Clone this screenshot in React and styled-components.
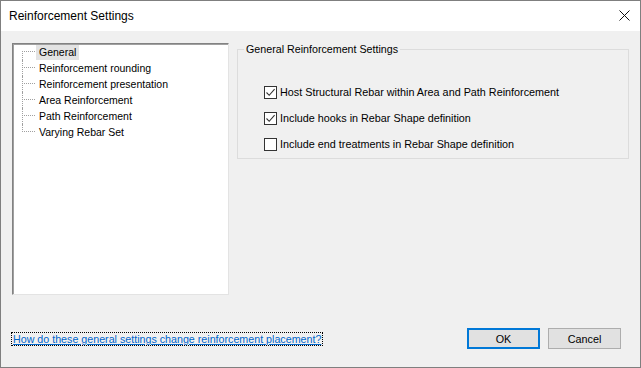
import React from 'react';
import styled, { createGlobalStyle } from 'styled-components';

const GlobalStyle = createGlobalStyle`
  html, body {
    margin: 0;
    padding: 0;
    background: #ffffff;
  }
  body {
    font-family: 'Liberation Sans', Arial, sans-serif;
    font-size: 10.7px;
    color: #000;
  }
`;

const treeItems = [
  'General',
  'Reinforcement rounding',
  'Reinforcement presentation',
  'Area Reinforcement',
  'Path Reinforcement',
  'Varying Rebar Set',
];

const options = [
  { label: 'Host Structural Rebar within Area and Path Reinforcement', checked: true },
  { label: 'Include hooks in Rebar Shape definition', checked: true },
  { label: 'Include end treatments in Rebar Shape definition', checked: false },
];

const App = () => {
  return (
    <>
      <GlobalStyle />
      <Window>
        <TitleBar>
          <Title>Reinforcement Settings</Title>
          <CloseButton>
            <svg width="11" height="11" viewBox="0 0 11 11">
              <path d="M0.5 0.5 L10.5 10.5 M10.5 0.5 L0.5 10.5" stroke="#111" strokeWidth="1" fill="none" />
            </svg>
          </CloseButton>
        </TitleBar>
        <Body>
          <MainRow>
            <TreeBox>
              {treeItems.map((item, i) => (
                <TreeRow key={item} first={i === 0} last={i === treeItems.length - 1}>
                  <TreeLabel selected={i === 0}>{item}</TreeLabel>
                </TreeRow>
              ))}
            </TreeBox>
            <GroupBox>
              <Legend>General Reinforcement Settings</Legend>
              <OptionList>
                {options.map((opt) => (
                  <OptionRow key={opt.label}>
                    <CheckBox>
                      {opt.checked && (
                        <svg width="11" height="11" viewBox="0 0 11 11">
                          <path d="M1.5 5.5 L4.2 8.3 L9.6 2.2" stroke="#333" strokeWidth="1.1" fill="none" />
                        </svg>
                      )}
                    </CheckBox>
                    <span>{opt.label}</span>
                  </OptionRow>
                ))}
              </OptionList>
            </GroupBox>
          </MainRow>
          <BottomRow>
            <HelpLink href="#">How do these general settings change reinforcement placement?</HelpLink>
            <Buttons>
              <DialogButton primary>OK</DialogButton>
              <DialogButton>Cancel</DialogButton>
            </Buttons>
          </BottomRow>
        </Body>
      </Window>
    </>
  );
};

const Window = styled.div`
  width: 641px;
  height: 368px;
  box-sizing: border-box;
  border: 1px solid #7f7f7f;
  display: flex;
  flex-direction: column;
  overflow: hidden;
`;

const TitleBar = styled.div`
  height: 30px;
  background: #ffffff;
  display: flex;
  align-items: center;
  justify-content: space-between;
  padding: 0 10px 0 8px;
`;

const Title = styled.div`
  font-size: 12px;
  color: #000;
`;

const CloseButton = styled.div`
  width: 11px;
  height: 11px;
  display: flex;
  margin-top: -1px;
`;

const Body = styled.div`
  flex: 1;
  background: #f0f0f0;
  padding: 12px 11px 18px 11px;
  display: flex;
  flex-direction: column;
`;

const MainRow = styled.div`
  display: flex;
  gap: 8px;
  align-items: flex-start;
`;

const TreeBox = styled.div`
  width: 217px;
  height: 252px;
  box-sizing: border-box;
  background: #ffffff;
  border: 1px solid;
  border-color: #828282 #e3e3e3 #e3e3e3 #828282;
  box-shadow: inset 1px 1px 0 #a0a0a0;
  padding: 0;
`;

const TreeRow = styled.div`
  position: relative;
  height: 16px;
  display: flex;
  align-items: center;
  padding-left: 23px;

  &::before {
    content: '';
    position: absolute;
    left: 9px;
    top: 7px;
    width: 13px;
    border-top: 1px dotted #a0a0a0;
  }

  &::after {
    content: '';
    position: absolute;
    left: 9px;
    top: ${(p) => (p.first ? '7px' : '0')};
    height: ${(p) => (p.last ? '8px' : p.first ? '9px' : '16px')};
    border-left: 1px dotted #a0a0a0;
  }
`;

const TreeLabel = styled.span`
  height: 15px;
  line-height: 15px;
  padding: 0 3px;
  background: ${(p) => (p.selected ? '#e3e3e3' : 'transparent')};
  white-space: nowrap;
  font-size: 10.5px;
`;

const GroupBox = styled.fieldset`
  width: 392px;
  box-sizing: border-box;
  margin: 0;
  padding: 0 0 1px 6px;
  border: 1px solid #dcdcdc;
  min-width: 0;
`;

const Legend = styled.legend`
  padding: 0 2px;
  line-height: 13px;
  font-size: 10.7px;
`;

const OptionList = styled.div`
  display: flex;
  flex-direction: column;
  padding: 23px 0 0 20px;
`;

const OptionRow = styled.label`
  height: 26px;
  display: flex;
  align-items: center;
  gap: 3px;
  font-size: 10.8px;
  white-space: nowrap;
`;

const CheckBox = styled.span`
  width: 13px;
  height: 13px;
  box-sizing: border-box;
  border: 1px solid #333333;
  background: #ffffff;
  display: flex;
  align-items: center;
  justify-content: center;
`;

const BottomRow = styled.div`
  margin-top: auto;
  display: flex;
  align-items: center;
  justify-content: space-between;
  padding-right: 8px;
`;

const HelpLink = styled.a`
  color: #0066cc;
  text-decoration: underline;
  font-size: 10.7px;
  line-height: 12px;
  outline: 1px dotted #000;
  outline-offset: 0;
  padding: 0 1px;
  margin-top: 1px;
`;

const Buttons = styled.div`
  display: flex;
  gap: 8px;
`;

const DialogButton = styled.button`
  width: 73px;
  height: 21px;
  box-sizing: border-box;
  font-family: 'Liberation Sans', Arial, sans-serif;
  font-size: 10.8px;
  color: #000;
  background: #e1e1e1;
  border: ${(p) => (p.primary ? '2px solid #0078d7' : '1px solid #adadad')};
  padding: 0;
`;

export default App;
